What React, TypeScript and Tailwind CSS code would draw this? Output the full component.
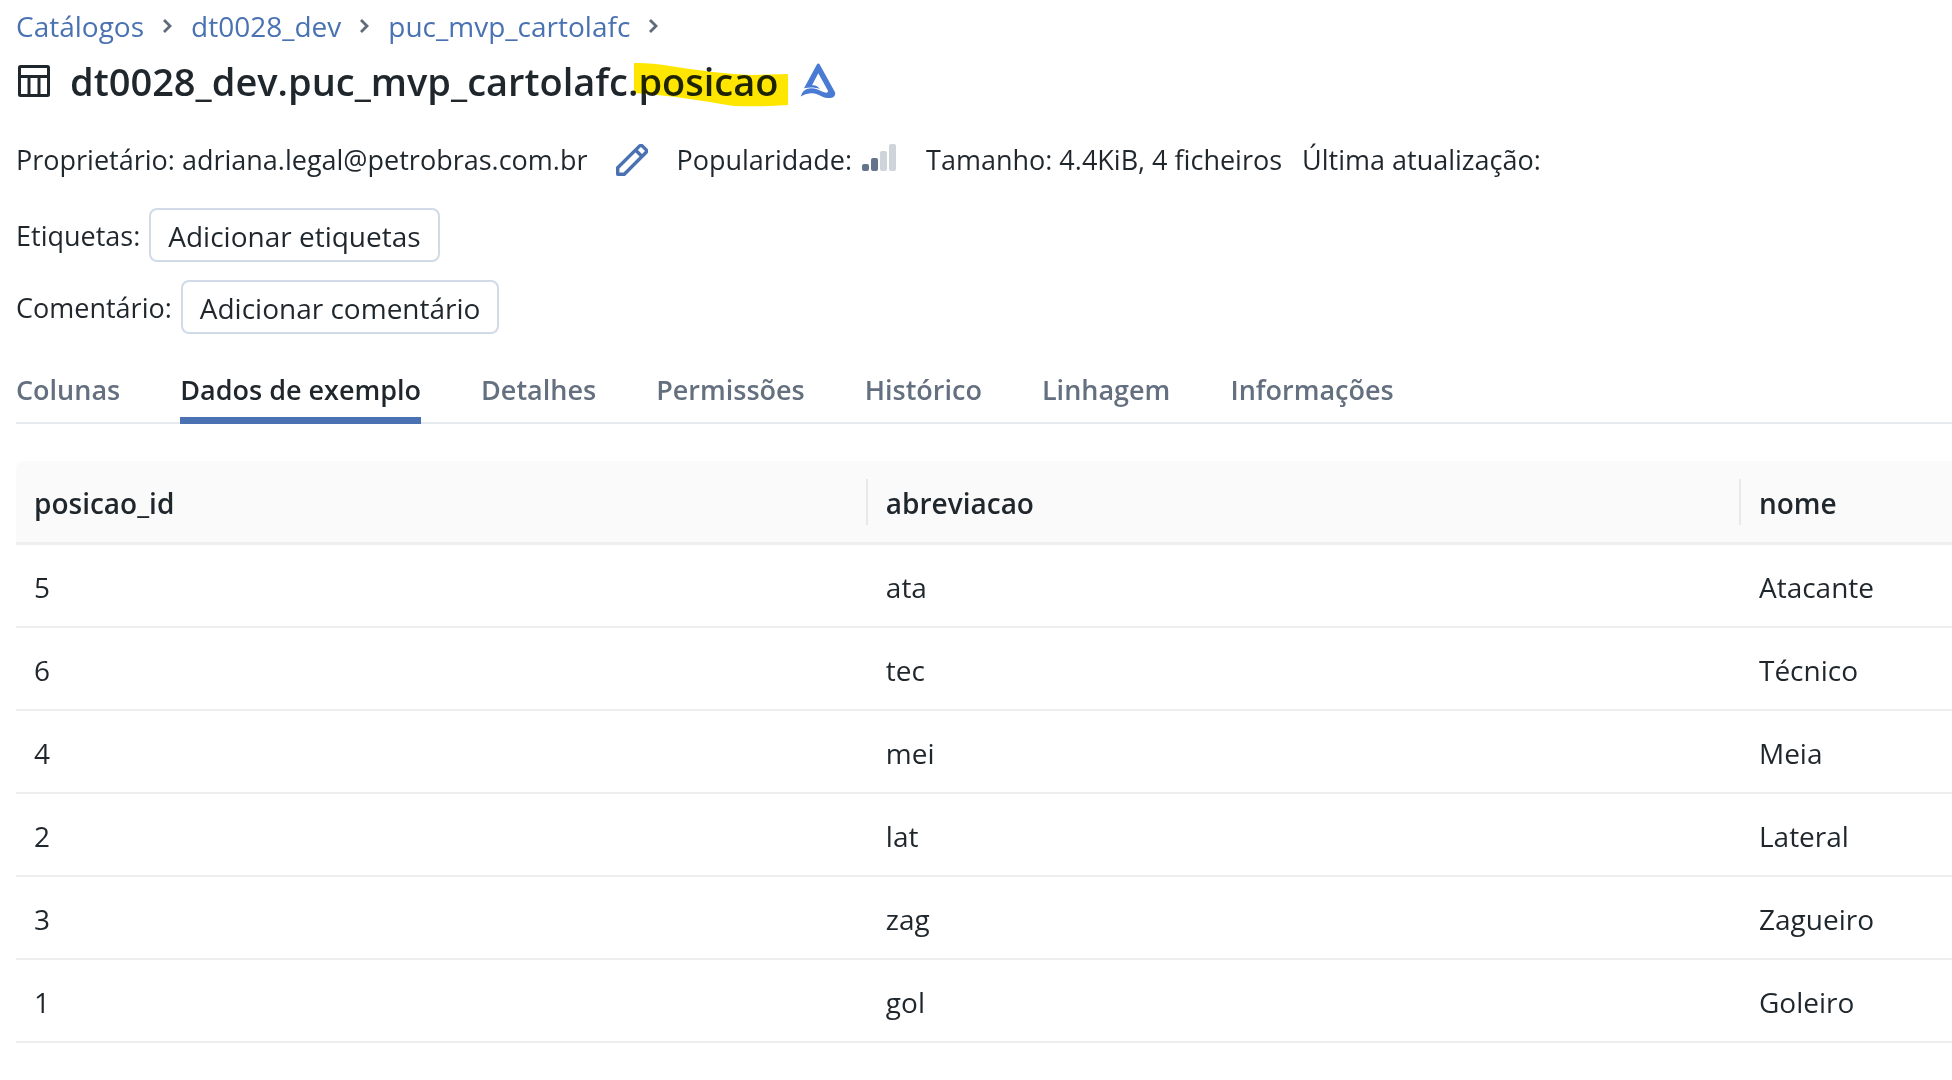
const crumbs = ["Catálogos", "dt0028_dev", "puc_mvp_cartolafc"];

const tabs = ["Colunas", "Dados de exemplo", "Detalhes", "Permissões", "Histórico", "Linhagem", "Informações"];

const rows = [
  ["5", "ata", "Atacante"],
  ["6", "tec", "Técnico"],
  ["4", "mei", "Meia"],
  ["2", "lat", "Lateral"],
  ["3", "zag", "Zagueiro"],
  ["1", "gol", "Goleiro"],
];

function Chevron() {
  return (
    <svg className="h-4 w-2.5" viewBox="0 0 10 16" fill="none" stroke="#5f6b7a" strokeWidth="2.8" aria-hidden="true">
      <path d="M2 2l6 6-6 6" />
    </svg>
  );
}

function TableIcon() {
  return (
    <svg className="h-8 w-8 shrink-0" viewBox="0 0 32 32" fill="none" stroke="#1f272d" strokeWidth="3" aria-hidden="true">
      <rect x="1.5" y="1.5" width="29" height="29" rx="1" />
      <path d="M1.5 11.5h29M11 11.5v19M21 11.5v19" />
    </svg>
  );
}

function DeltaLogo() {
  return (
    <svg className="ml-0.5 h-9 w-9 shrink-0" viewBox="0 0 36 36" fill="#4a7bd4" role="img" aria-label="Delta">
      <path
        fillRule="evenodd"
        d="M18.300 .5c.6 0 1 .3 1.300 .8L34.600 28.500c1.500 2.500 .2 5.500-3 6.200-3 .8-6.500 .2-9.600-1.300-4-2-7-3.600-11.500-3.200-3.500 .3-6.500 1.500-9.700 3.300 .8-3.500 3-6.200 6-7.400 6-2.300 10.300 .1 15.200 2.400 2.300 1.100 4.500 1.500 5.500 .8 .7-.5 .6-1.300 .2-2L18.300 10.200l-6.300 12c3.300-.4 6 .8 8 3.800-4.800-1.500-9.600-2-16-.8L17 1.300c.3-.5 .7-.8 1.300-.8z"
      />
    </svg>
  );
}

function PencilIcon() {
  return (
    <svg className="h-8 w-8" viewBox="0 0 32 32" fill="none" stroke="#4a72b2" strokeWidth="3.4" strokeLinejoin="round" aria-hidden="true">
      <path d="M1.700 30.300v-6.600L23.700 1.900q1.300-.9 2.500 0l4 4q.9 1.200 0 2.400L8.300 30.300zM19.500 6l6.500 6.500" />
    </svg>
  );
}

function PopularityBars() {
  return (
    <svg className="mb-1 h-7 w-[34px]" viewBox="0 0 34 28" role="img" aria-label="Popularidade baixa">
      <g fill="#64748a">
        <rect x="0" y="20" width="7" height="7" rx="2" />
        <rect x="9" y="14" width="7" height="13" rx="2" />
      </g>
      <g fill="#cfd4da">
        <rect x="18" y="7" width="7" height="20" rx="2" />
        <rect x="27" y="0" width="7" height="27" rx="2" />
      </g>
    </svg>
  );
}

function AddButton({ label }: { label: string }) {
  return (
    <button type="button" className="h-[54px] rounded-lg border-2 border-[#d1dbe7] px-[17px] pt-0.5 text-[28px]">
      {label}
    </button>
  );
}

export default function App() {
  return (
    <div className="min-h-screen overflow-x-hidden bg-white pl-4 text-[28px] leading-10 text-[#1f272d] font-['Open_Sans',sans-serif]">
      <nav aria-label="Trilha" className="flex items-center gap-[19px] pt-[6px] text-[#4a72b2]">
        {crumbs.map((c) => (
          <span key={c} className="flex items-center gap-[18px]">
            <a href="#">{c}</a>
            <Chevron />
          </span>
        ))}
      </nav>

      <header className="mt-2 flex items-center gap-5 pl-0.5">
        <TableIcon />
        <h1 className="text-[38px] leading-[54px] font-semibold">
          dt0028_dev.puc_mvp_cartolafc.
          <span className="relative">
            posicao
            <svg
              className="absolute top-2 -left-1 h-11 w-[154px] mix-blend-multiply"
              viewBox="0 0 154 44"
              fill="#ffe600"
              preserveAspectRatio="none"
              aria-hidden="true"
            >
              <path d="M0 0C16 0 24 1 36 3 62 7 90 11 118 12L154 11V42Q128 44 100 43C70 38 40 33 0 30z" />
            </svg>
          </span>
        </h1>
        <DeltaLogo />
      </header>

      <div className="mt-8 flex items-center text-[27px] whitespace-nowrap">
        <span>Proprietário: adriana.legal@petrobras.com.br</span>
        <button type="button" aria-label="Editar proprietário" className="mr-7 ml-[29px]">
          <PencilIcon />
        </button>
        <span className="mr-2.5">Popularidade:</span>
        <PopularityBars />
        <span className="ml-[30px]">Tamanho: 4.4KiB, 4 ficheiros</span>
        <span className="ml-5">Última atualização:</span>
      </div>

      <div className="mt-7 flex items-center gap-[9px] text-[27px]">
        <span className="pt-0.5">Etiquetas:</span>
        <AddButton label="Adicionar etiquetas" />
      </div>
      <div className="mt-[18px] flex items-center gap-[9px] text-[27px]">
        <span className="pt-0.5">Comentário:</span>
        <AddButton label="Adicionar comentário" />
      </div>

      <div role="tablist" className="mt-9 flex gap-[60px] border-b-2 border-[#e6eaef] text-[27px] font-semibold text-[#64707f]">
        {tabs.map((t, i) => (
          <button
            key={t}
            type="button"
            role="tab"
            aria-selected={i === 1}
            className="-mb-0.5 h-[54px] border-b-[7px] border-transparent pb-[7px] aria-selected:border-[#4a72b2] aria-selected:text-[#1f272d]"
          >
            {t}
          </button>
        ))}
      </div>

      <table className="mt-[37px] w-full table-fixed border-separate border-spacing-0 text-left">
        <thead>
          <tr className="h-[84px]">
            <th className="w-[44%] rounded-tl-lg border-b-[3px] border-[#eeeeee] bg-[#fafafa] p-0 font-semibold">
              <div className="border-r-2 border-[#e9e9e9] px-[18px] pt-1 pb-0.5">posicao_id</div>
            </th>
            <th className="w-[45.1%] border-b-[3px] border-[#eeeeee] bg-[#fafafa] p-0 font-semibold">
              <div className="border-r-2 border-[#e9e9e9] px-[18px] pt-1 pb-0.5">abreviacao</div>
            </th>
            <th className="border-b-[3px] border-[#eeeeee] bg-[#fafafa] p-0 font-semibold">
              <div className="px-[18px] pt-1 pb-0.5">nome</div>
            </th>
          </tr>
        </thead>
        <tbody>
          {rows.map((r) => (
            <tr key={r[0]} className="h-[83px]">
              {r.map((c) => (
                <td key={c} className="border-b-2 border-[#eeeeee] px-[18px] pt-0.5 pb-0">
                  {c}
                </td>
              ))}
            </tr>
          ))}
        </tbody>
      </table>
    </div>
  );
}
